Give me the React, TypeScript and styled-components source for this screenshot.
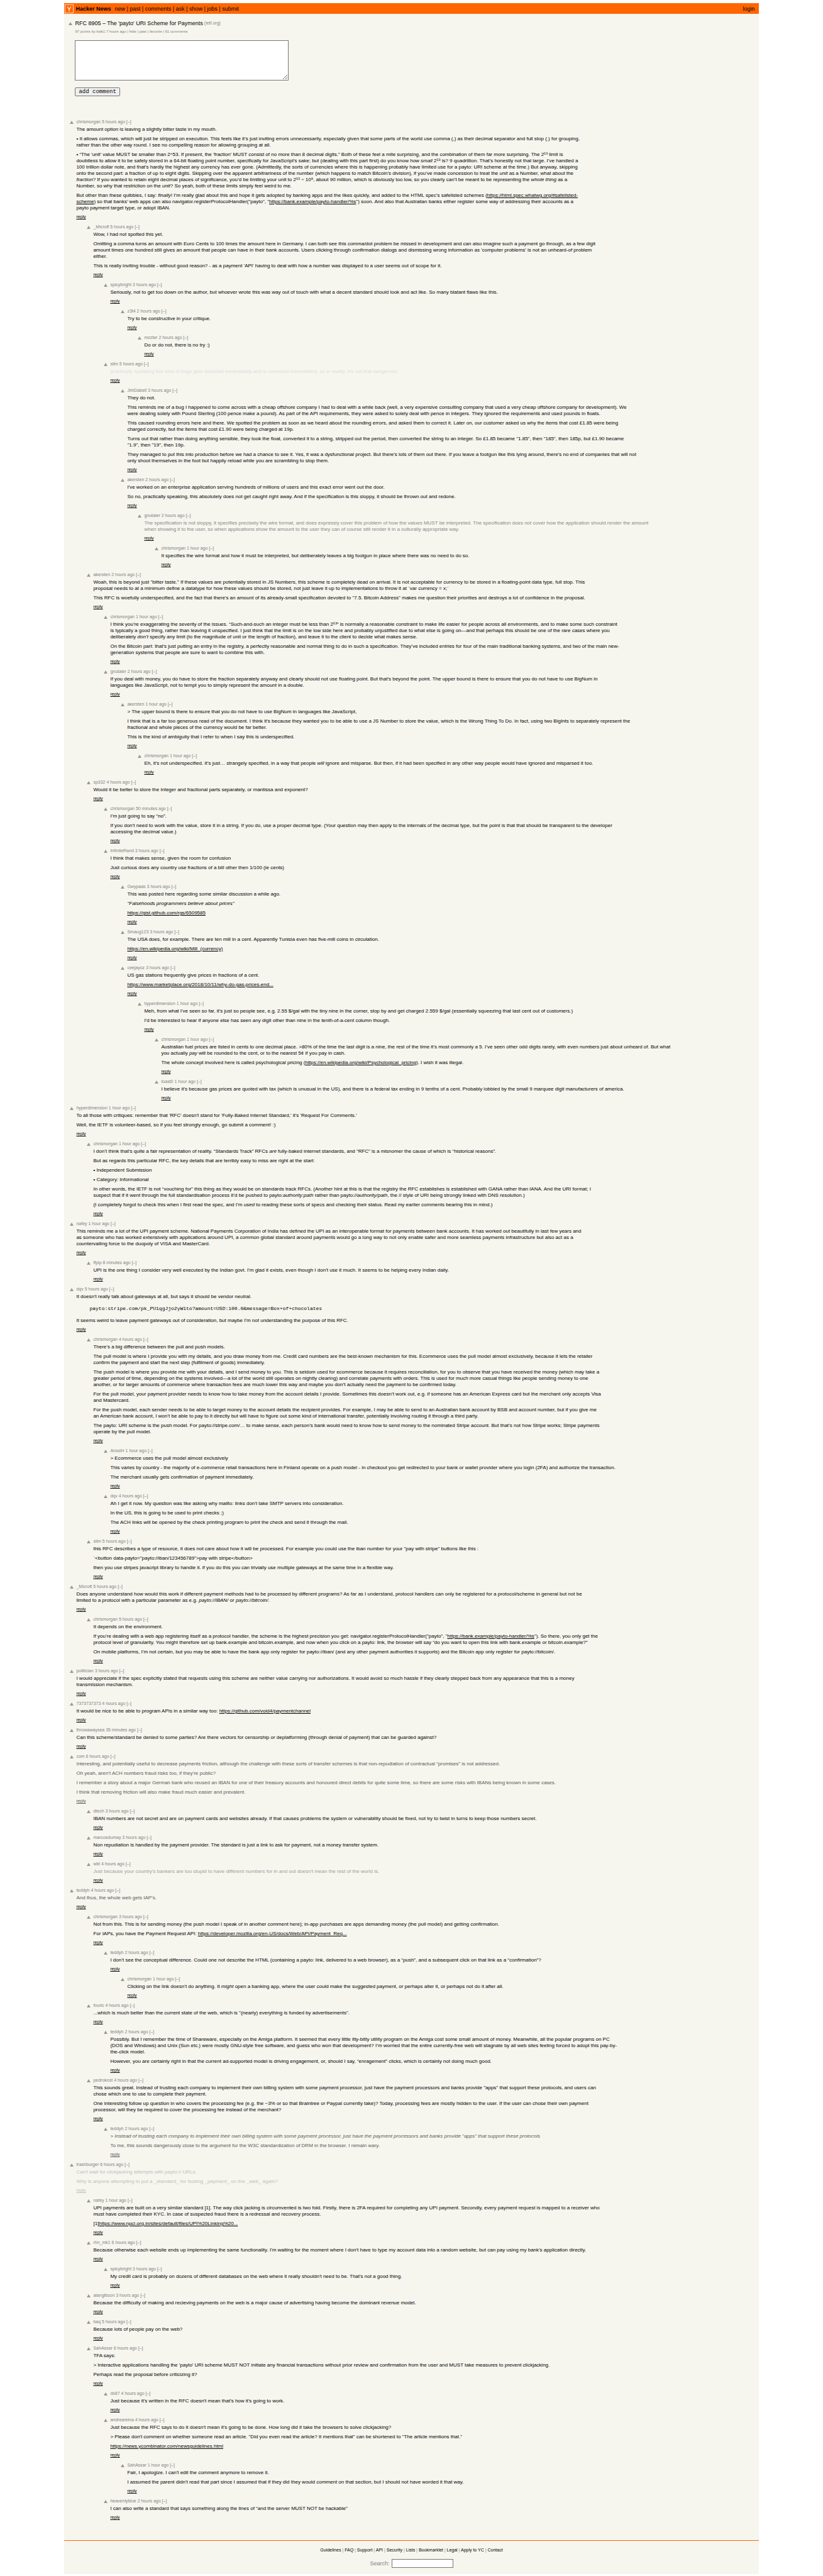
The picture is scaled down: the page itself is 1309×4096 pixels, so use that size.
import React from "react";
import styled, { createGlobalStyle } from "styled-components";

const sans = '"Liberation Sans", Arial, Helvetica, sans-serif';
const mono = '"Liberation Mono", "Courier New", monospace';

const GlobalStyle = createGlobalStyle`
  body {
    margin: 5px;
    background: #ffffff;
    color: #000000;
    font-family: ${sans};
    font-size: 8px;
    line-height: 10px;
  }
`;

const Page = styled.div`
  width: 85%;
  margin: 0 auto;
  background: #f6f6ef;
`;

const TopBar = styled.header`
  display: flex;
  align-items: center;
  height: 17px;
  padding: 0 6px 0 1px;
  background: #ff6600;
  font-size: 9px;
  line-height: 12px;
`;

const Logo = styled.a`
  display: flex;
  width: 14px;
  height: 14px;
  margin-right: 3px;
`;

const SiteName = styled.a`
  margin-right: 6px;
  color: #000000;
  font-weight: bold;
  text-decoration: none;
`;

const TopNav = styled.nav`
  flex: 1;
`;

const PlainLink = styled.a`
  color: inherit;
  text-decoration: none;
`;

const Story = styled.section`
  padding: 9px 0 0 7px;
`;

const TitleRow = styled.div`
  display: flex;
  align-items: center;
  font-size: 9px;
  line-height: 12px;
`;

const SiteBit = styled.span`
  margin-left: 2px;
  color: #828282;
  font-size: 7px;
`;

const VoteButton = styled.button`
  display: flex;
  align-items: center;
  width: 6px;
  height: 8px;
  margin: 0 4px 0 0;
  padding: 1px 0 0;
  border: 0;
  background: none;
`;

const Subtext = styled.div`
  margin: 3px 0 0 10px;
  color: #828282;
  font-size: 6px;
  line-height: 8px;
`;

const ReplyForm = styled.form`
  display: flex;
  flex-direction: column;
  align-items: flex-start;
  gap: 11px;
  margin: 10px 0 0 10px;
`;

const CommentBox = styled.textarea`
  box-sizing: border-box;
  width: 340px;
  height: 64px;
  margin: 0;
  padding: 1px;
  border: 1px solid #767676;
  border-radius: 0;
  background: #ffffff;
  font-family: ${mono};
  font-size: 9px;
`;

const SubmitButton = styled.button`
  height: 14px;
  padding: 0 5px;
  border: 1px solid #767676;
  border-radius: 2px;
  background: #efefef;
  color: #000000;
  font-family: ${mono};
  font-size: 9px;
  line-height: 12px;
`;

const Thread = styled.ul`
  display: flex;
  flex-direction: column;
  gap: 8px;
  margin: 37px 0 0;
  padding: 0 0 0 9px;
  list-style: none;
`;

const Item = styled.li<{ $depth: number }>`
  padding-left: ${(p) => p.$depth * 27}px;
`;

const CommentHead = styled.div`
  display: flex;
  color: #828282;
  font-size: 7px;
  line-height: 8px;
`;

const CommentBody = styled.div<{ $tone: string }>`
  display: flex;
  flex-direction: column;
  gap: 5px;
  max-width: 810px;
  margin: 3px 0 0 10px;
  color: ${(p) => p.$tone};

  p,
  pre {
    margin: 0;
  }

  a {
    color: inherit;
  }
`;

const CodeBlock = styled.pre`
  padding: 4px 0 4px 21px;
  overflow: auto;
  font-family: ${mono};
`;

const ReplyLink = styled.a<{ $tone: string }>`
  display: block;
  width: fit-content;
  margin: 5px 0 0 10px;
  color: ${(p) => p.$tone};
  font-size: 7px;
  line-height: 8px;
`;

const Footer = styled.footer`
  display: flex;
  flex-direction: column;
  align-items: center;
  gap: 9px;
  margin-top: 32px;
  padding: 10px 0;
  border-top: 1px solid #ff6600;
  color: #828282;
`;

const FooterLinks = styled.nav`
  font-size: 7px;
  line-height: 10px;

  a {
    color: #000000;
  }
`;

const SearchForm = styled.form`
  display: flex;
  align-items: center;
  gap: 3px;
  font-size: 9px;
  line-height: 12px;
`;

const SearchInput = styled.input`
  box-sizing: border-box;
  width: 98px;
  height: 14px;
  padding: 0 1px;
  border: 1px solid #767676;
  border-radius: 0;
  background: #ffffff;
  font-family: ${mono};
  font-size: 9px;
`;

function UpArrow() {
  return (
    <VoteButton type="button" aria-label="upvote">
      <svg width="6" height="5" viewBox="0 0 6 5">
        <path d="M3 0L6 5H0Z" fill="#999999" />
      </svg>
    </VoteButton>
  );
}

function LinkRow({ items }: { items: string[] }) {
  return (
    <>
      {items.map((item, i) => (
        <React.Fragment key={item}>
          {i > 0 && " | "}
          <PlainLink href="#">{item}</PlainLink>
        </React.Fragment>
      ))}
    </>
  );
}

function Out({ children }: { children: string }) {
  return <a href="#">{children}</a>;
}

type Comment = {
  depth: number;
  by: string;
  age: string;
  body: React.ReactNode[];
  tone?: string;
  replyTone?: string;
};

const comments: Comment[] = [
  {
    depth: 0,
    by: "chrismorgan",
    age: "5 hours ago",
    body: [
      "The amount option is leaving a slightly bitter taste in my mouth.",
      "• It allows commas, which will just be stripped on execution. This feels like it’s just inviting errors unnecessarily, especially given that some parts of the world use comma (,) as their decimal separator and full stop (.) for grouping, rather than the other way round. I see no compelling reason for allowing grouping at all.",
      <>
        • “The 'unit' value MUST be smaller than 2^53. If present, the 'fraction' MUST consist of no more than 8
        decimal digits.” Both of these feel a mite surprising, and the combination of them far more surprising. The
        2⁵³ limit is doubtless to allow it to be safely stored in a 64-bit floating point number, specifically for
        JavaScript’s sake; but (dealing with this part first) do you know how <i>small</i> 2⁵³ is? 9 quadrillion.
        That’s honestly not that large. I’ve handled a 100 trillion dollar note, and that’s hardly the highest any
        currency has ever gone. (Admittedly, the sorts of currencies where this is happening probably have limited use
        for a payto: URI scheme at the time.) But anyway, skipping onto the second part: a fraction of up to eight
        digits. Skipping over the apparent arbitrariness of the number (which happens to match Bitcoin’s division), if
        you’ve made concession to treat the <i>unit</i> as a Number, what about the <i>fraction</i>? If you wanted to
        retain eight decimal places of significance, you’d be limiting your unit to 2⁵³ ÷ 10⁸, about 90 million, which
        is obviously too low, so you clearly can’t be meant to be representing the <i>whole thing</i> as a Number, so
        why that restriction on the <i>unit</i>? So yeah, both of these limits simply feel weird to me.
      </>,
      <>
        But other than these quibbles, I say: <i>finally</i>! I’m really glad about this and hope it gets adopted by
        banking apps and the likes quickly, and added to the HTML spec’s safelisted schemes (
        <Out>https://html.spec.whatwg.org/#safelisted-scheme</Out>) so that banks’ web apps can also
        navigator.registerProtocolHandler("payto", "<Out>https://bank.example/payto-handler/%s</Out>") soon. And also
        that Australian banks either register some way of addressing their accounts as a payto payment target type, or
        adopt IBAN.
      </>,
    ],
  },
  {
    depth: 1,
    by: "_Microft",
    age: "5 hours ago",
    body: [
      "Wow, I had not spotted this yet.",
      "Omitting a comma turns an amount with Euro Cents to 100 times the amount here in Germany. I can both see this comma/dot problem be missed in development and can also imagine such a payment go through, as a few digit amount times one hundred still gives an amount that people can have in their bank accounts. Users clicking through confirmation dialogs and dismissing wrong information as 'computer problems' is not an unheard-of problem either.",
      "This is really inviting trouble - without good reason? - as a payment 'API' having to deal with how a number was displayed to a user seems out of scope for it.",
    ],
  },
  {
    depth: 2,
    by: "spicybright",
    age: "3 hours ago",
    body: [
      "Seriously, not to get too down on the author, but whoever wrote this was way out of touch with what a decent standard should look and act like. So many blatant flaws like this.",
    ],
  },
  { depth: 3, by: "z3t4", age: "2 hours ago", body: ["Try to be constructive in your critique."] },
  { depth: 4, by: "mzzter", age: "2 hours ago", body: ["Do or do not, there is no try :)"] },
  {
    depth: 2,
    by: "slim",
    age: "5 hours ago",
    tone: "#dddddd",
    body: [
      "practically speaking this kind of bugs gets detected immediately and is corrected immediately. so in reality, it's not that dangerous.",
    ],
  },
  {
    depth: 3,
    by: "JimDabell",
    age: "3 hours ago",
    body: [
      "They do not.",
      "This reminds me of a bug I happened to come across with a cheap offshore company I had to deal with a while back (well, a very expensive consulting company that used a very cheap offshore company for development). We were dealing solely with Pound Sterling (100 pence make a pound). As part of the API requirements, they were asked to solely deal with pence in integers. They ignored the requirements and used pounds in floats.",
      "This caused rounding errors here and there. We spotted the problem as soon as we heard about the rounding errors, and asked them to correct it. Later on, our customer asked us why the items that cost £1.85 were being charged correctly, but the items that cost £1.90 were being charged at 19p.",
      'Turns out that rather than doing anything sensible, they took the float, converted it to a string, stripped out the period, then converted the string to an integer. So £1.85 became "1.85", then "185", then 185p, but £1.90 became "1.9", then "19", then 19p.',
      "They managed to put this into production before we had a chance to see it. Yes, it was a dysfunctional project. But there’s lots of them out there. If you leave a footgun like this lying around, there’s no end of companies that will not only shoot themselves in the foot but happily reload while you are scrambling to stop them.",
    ],
  },
  {
    depth: 3,
    by: "akersten",
    age: "2 hours ago",
    body: [
      "I've worked on an enterprise application serving hundreds of millions of users and this exact error went out the door.",
      "So no, practically speaking, this absolutely does not get caught right away. And if the specification is this sloppy, it should be thrown out and redone.",
    ],
  },
  {
    depth: 4,
    by: "gnutaler",
    age: "2 hours ago",
    tone: "#888888",
    body: [
      "The specification is not sloppy, it specifies precisely the wire format, and does expressly cover this problem of how the values MUST be interpreted. The specification does not cover how the application should render the amount when showing it to the user, so when applications show the amount to the user they can of course still render it in a culturally appropriate way.",
    ],
  },
  {
    depth: 5,
    by: "chrismorgan",
    age: "1 hour ago",
    body: [
      "It specifies the wire format and how it must be interpreted, but deliberately leaves a big footgun in place where there was no need to do so.",
    ],
  },
  {
    depth: 1,
    by: "akersten",
    age: "2 hours ago",
    body: [
      'Woah, this is beyond just "bitter taste." If these values are potentially stored in JS Numbers, this scheme is completely dead on arrival. It is not acceptable for currency to be stored in a floating-point data type, full stop. This proposal needs to at a minimum define a datatype for how these values should be stored, not just leave it up to implementations to throw it at `var currency = x;`',
      "This RFC is woefully underspecified, and the fact that there's an amount of its already-small specification devoted to \"7.5. Bitcoin Address\" makes me question their priorities and destroys a lot of confidence in the proposal.",
    ],
  },
  {
    depth: 2,
    by: "chrismorgan",
    age: "1 hour ago",
    body: [
      <>
        I think you’re exaggerating the severity of the issues. “Such-and-such an integer must be less than 2⁵³” is
        normally a reasonable constraint to make life easier for people across all environments, and to make some such
        constraint is typically a good thing, rather than leaving it unspecified. I just think that the limit is on the
        low side here and probably unjustified due to what else is going on—and that perhaps this should be one of the
        rare cases where you deliberately <i>don’t</i> specify any limit (to the magnitude of unit or the length of
        fraction), and leave it to the client to decide what makes sense.
      </>,
      "On the Bitcoin part: that’s just putting an entry in the registry, a perfectly reasonable and normal thing to do in such a specification. They’ve included entries for four of the main traditional banking systems, and two of the main new-generation systems that people are sure to want to combine this with.",
    ],
  },
  {
    depth: 2,
    by: "gnutaler",
    age: "2 hours ago",
    body: [
      "If you deal with money, you do have to store the fraction separately anyway and clearly should not use floating point. But that's beyond the point. The upper bound is there to ensure that you do not have to use BigNum in languages like JavaScript, not to tempt you to simply represent the amount in a double.",
    ],
  },
  {
    depth: 3,
    by: "akersten",
    age: "1 hour ago",
    body: [
      "> The upper bound is there to ensure that you do not have to use BigNum in languages like JavaScript,",
      "I think that is a far too generous read of the document. I think it's because they wanted you to be able to use a JS Number to store the value, which is the Wrong Thing To Do. In fact, using two BigInts to separately represent the fractional and whole pieces of the currency would be far better.",
      "This is the kind of ambiguity that I refer to when I say this is underspecified.",
    ],
  },
  {
    depth: 4,
    by: "chrismorgan",
    age: "1 hour ago",
    body: [
      <>
        Eh, it’s not underspecified. It’s just… strangely specified, in a way that people <i>will</i> ignore and
        misparse. But then, if it had been specified in any other way people would have ignored and misparsed it too.
      </>,
    ],
  },
  {
    depth: 1,
    by: "sp332",
    age: "4 hours ago",
    body: ["Would it be better to store the integer and fractional parts separately, or mantissa and exponent?"],
  },
  {
    depth: 2,
    by: "chrismorgan",
    age: "50 minutes ago",
    body: [
      "I’m just going to say “no”.",
      "If you don’t need to work with the value, store it in a string. If you do, use a proper decimal type. (Your question may then apply to the internals of the decimal type, but the point is that that should be transparent to the developer accessing the decimal value.)",
    ],
  },
  {
    depth: 2,
    by: "InfiniteRand",
    age: "3 hours ago",
    body: [
      "I think that makes sense, given the room for confusion",
      "Just curious does any country use fractions of a bill other then 1/100 (ie cents)",
    ],
  },
  {
    depth: 3,
    by: "Gwypaas",
    age: "3 hours ago",
    body: [
      "This was posted here regarding some similar discussion a while ago.",
      <i>"Falsehoods programmers believe about prices"</i>,
      <Out>https://gist.github.com/rgs/6509585</Out>,
    ],
  },
  {
    depth: 3,
    by: "Smaug123",
    age: "3 hours ago",
    body: [
      "The USA does, for example. There are ten mill in a cent. Apparently Tunisia even has five-mill coins in circulation.",
      <Out>https://en.wikipedia.org/wiki/Mill_(currency)</Out>,
    ],
  },
  {
    depth: 3,
    by: "ceejayoz",
    age: "3 hours ago",
    body: [
      "US gas stations frequently give prices in fractions of a cent.",
      <Out>https://www.marketplace.org/2018/10/11/why-do-gas-prices-end...</Out>,
    ],
  },
  {
    depth: 4,
    by: "hyperdimension",
    age: "1 hour ago",
    body: [
      "Meh, from what I've seen so far, it's just so people see, e.g. 2.55 $/gal with the tiny nine in the corner, stop by and get charged 2.559 $/gal (essentially squeezing that last cent out of customers.)",
      "I'd be interested to hear if anyone else has seen any digit other than nine in the tenth-of-a-cent column though.",
    ],
  },
  {
    depth: 5,
    by: "chrismorgan",
    age: "1 hour ago",
    body: [
      <>
        Australian fuel prices are listed in cents to one decimal place. &gt;80% of the time the last digit is a nine,
        the rest of the time it’s most commonly a 5. I’ve seen other odd digits rarely, with even numbers just about
        unheard of. But what you actually <i>pay</i> will be rounded to the cent, or to the nearest 5¢ if you pay in
        cash.
      </>,
      <>
        The whole concept involved here is called psychological pricing (
        <Out>https://en.wikipedia.org/wiki/Psychological_pricing</Out>). I wish it was illegal.
      </>,
    ],
  },
  {
    depth: 5,
    by: "toast0",
    age: "1 hour ago",
    body: [
      "I believe it's because gas prices are quoted with tax (which is unusual in the US), and there is a federal tax ending in 9 tenths of a cent. Probably lobbied by the small 9 marquee digit manufacturers of america.",
    ],
  },
  {
    depth: 0,
    by: "hyperdimension",
    age: "1 hour ago",
    body: [
      "To all those with critiques: remember that 'RFC' doesn't stand for 'Fully-Baked Internet Standard,' it's 'Request For Comments.'",
      "Well, the IETF is volunteer-based, so if you feel strongly enough, go submit a comment! :)",
    ],
  },
  {
    depth: 1,
    by: "chrismorgan",
    age: "1 hour ago",
    body: [
      <>
        I don’t think that’s quite a fair representation of reality. “Standards Track” RFCs <i>are</i> fully-baked
        internet standards, and “RFC” is a misnomer the cause of which is “historical reasons”.
      </>,
      "But as regards this particular RFC, the key details that are terribly easy to miss are right at the start:",
      "• Independent Submission",
      "• Category: Informational",
      <>
        In other words, the IETF is not “vouching for” this thing as they would be on standards track RFCs. (Another
        hint at this is that the registry the RFC establishes is established with GANA rather than IANA. And the URI
        format; I suspect that if it went through the full standardisation process it’d be pushed to payto:
        <i>authority:path</i> rather than payto:<i>//authority/path</i>, the // style of URI being strongly linked with
        DNS resolution.)
      </>,
      <>
        (I completely forgot to check this when I first read the spec, and I’m <i>used</i> to reading these sorts of
        specs and checking their status. Read my earlier comments bearing this in mind.)
      </>,
    ],
  },
  {
    depth: 0,
    by: "nafey",
    age: "1 hour ago",
    body: [
      "This reminds me a lot of the UPI payment scheme. National Payments Corporation of India has defined the UPI as an interoperable format for payments between bank accounts. It has worked out beautifully in last few years and as someone who has worked extensively with applications around UPI, a common global standard around payments would go a long way to not only enable safer and more seamless payments infrastructure but also act as a countervailing force to the duopoly of VISA and MasterCard.",
    ],
  },
  {
    depth: 1,
    by: "ffpip",
    age: "8 minutes ago",
    body: [
      "UPI is the one thing I consider very well executed by the Indian govt. I'm glad it exists, even though I don't use it much. It seems to be helping every Indian daily.",
    ],
  },
  {
    depth: 0,
    by: "dqv",
    age: "5 hours ago",
    body: [
      "It doesn't really talk about gateways at all, but says it should be vendor neutral.",
      <CodeBlock>payto:stripe.com/pk_PU1qgJjo2yW1to?amount=USD:100.0&amp;message=Box+of+chocolates</CodeBlock>,
      "It seems weird to leave payment gateways out of consideration, but maybe I'm not understanding the purpose of this RFC.",
    ],
  },
  {
    depth: 1,
    by: "chrismorgan",
    age: "4 hours ago",
    body: [
      "There’s a big difference between the pull and push models.",
      "The pull model is where I provide you with my details, and you draw money from me. Credit card numbers are the best-known mechanism for this. Ecommerce uses the pull model almost exclusively, because it lets the retailer confirm the payment and start the next step (fulfilment of goods) immediately.",
      "The push model is where you provide me with your details, and I send money to you. This is seldom used for ecommerce because it requires reconciliation, for you to observe that you have received the money (which may take a greater period of time, depending on the systems involved—a lot of the world still operates on nightly clearing) and correlate payments with orders. This is used for much more casual things like people sending money to one another, or for larger amounts of commerce where transaction fees are much lower this way and maybe you don’t actually need the payment to be confirmed today.",
      "For the pull model, your payment provider needs to know how to take money from the account details I provide. Sometimes this doesn’t work out, e.g. if someone has an American Express card but the merchant only accepts Visa and Mastercard.",
      "For the push model, each sender needs to be able to target money to the account details the recipient provides. For example, I may be able to send to an Australian bank account by BSB and account number, but if you give me an American bank account, I won’t be able to pay to it directly but will have to figure out some kind of international transfer, potentially involving routing it through a third party.",
      "The payto: URI scheme is the push model. For payto://stripe.com/… to make sense, each person’s bank would need to know how to send money to the nominated Stripe account. But that’s not how Stripe works; Stripe payments operate by the pull model.",
    ],
  },
  {
    depth: 2,
    by: "AnssiH",
    age: "1 hour ago",
    body: [
      "> Ecommerce uses the pull model almost exclusively",
      "This varies by country - the majority of e-commerce retail transactions here in Finland operate on a push model - in checkout you get redirected to your bank or wallet provider where you login (2FA) and authorize the transaction.",
      "The merchant usually gets confirmation of payment immediately.",
    ],
  },
  {
    depth: 2,
    by: "dqv",
    age: "4 hours ago",
    body: [
      "Ah I get it now. My question was like asking why mailto: links don't take SMTP servers into consideration.",
      "In the US, this is going to be used to print checks ;)",
      "The ACH links will be opened by the check printing program to print the check and send it through the mail.",
    ],
  },
  {
    depth: 1,
    by: "slim",
    age: "5 hours ago",
    body: [
      'this RFC describes a type of resource, it does not care about how it will be processed. For example you could use the iban number for your "pay with stripe" buttons like this :',
      '`<button data-payto="payto://iban/123456789">pay with stripe</button>',
      "then you use stripes javacript library to handle it. if you do this you can trivially use multiple gateways at the same time in a flexible way.",
    ],
  },
  {
    depth: 0,
    by: "_Microft",
    age: "5 hours ago",
    body: [
      <>
        Does anyone understand how would this work if different payment methods had to be processed by different
        programs? As far as I understand, protocol handlers can only be registered for a protocol/scheme in general but
        not be limited to a protocol with a particular parameter as e.g. <i>payto://IBAN/</i> or{" "}
        <i>payto://bitcoin/</i>.
      </>,
    ],
  },
  {
    depth: 1,
    by: "chrismorgan",
    age: "5 hours ago",
    body: [
      "It depends on the environment.",
      <>
        If you’re dealing with a web app registering itself as a protocol handler, the scheme is the highest precision
        you get: navigator.registerProtocolHandler("payto", "<Out>https://bank.example/payto-handler/%s</Out>"). So
        there, you only get the protocol level of granularity. You might therefore set up bank.example and
        bitcoin.example, and now when you click on a payto: link, the browser will say “do you want to open this link
        with bank.example or bitcoin.example?”
      </>,
      "On mobile platforms, I’m not certain, but you may be able to have the bank app only register for payto://iban/ (and any other payment authorities it supports) and the Bitcoin app only register for payto://bitcoin/.",
    ],
  },
  {
    depth: 0,
    by: "politician",
    age: "3 hours ago",
    body: [
      "I would appreciate if the spec explicitly stated that requests using this scheme are neither value carrying nor authorizations. It would avoid so much hassle if they clearly stepped back from any appearance that this is a money transmission mechanism.",
    ],
  },
  {
    depth: 0,
    by: "7373737373",
    age: "4 hours ago",
    body: [
      <>
        It would be nice to be able to program APIs in a similar way too:{" "}
        <Out>https://github.com/void4/paymentchannel</Out>
      </>,
    ],
  },
  {
    depth: 0,
    by: "throwawaysea",
    age: "35 minutes ago",
    body: [
      "Can this scheme/standard be denied to some parties? Are there vectors for censorship or deplatforming (through denial of payment) that can be guarded against?",
    ],
  },
  {
    depth: 0,
    by: "com",
    age: "6 hours ago",
    tone: "#5a5a5a",
    replyTone: "#5a5a5a",
    body: [
      "Interesting, and potentially useful to decrease payments friction, although the challenge with these sorts of transfer schemes is that non-repudiation of contractual “promises” is not addressed.",
      "Oh yeah, aren’t ACH numbers fraud risks too, if they’re public?",
      "I remember a story about a major German bank who reused an IBAN for one of their treasury accounts and honoured direct debits for quite some time, so there are some risks with IBANs being known in some cases.",
      "I think that removing friction will also make fraud much easier and prevalent.",
    ],
  },
  {
    depth: 1,
    by: "dtech",
    age: "3 hours ago",
    body: [
      "IBAN numbers are not secret and are on payment cards and websites already. If that causes problems the system or vulnerability should be fixed, not try to twist in turns to keep those numbers secret.",
    ],
  },
  {
    depth: 1,
    by: "marcosdumay",
    age: "3 hours ago",
    body: [
      "Non repudiation is handled by the payment provider. The standard is just a link to ask for payment, not a money transfer system.",
    ],
  },
  {
    depth: 1,
    by: "wbl",
    age: "4 hours ago",
    tone: "#9c9c9c",
    body: [
      "Just because your country's bankers are too stupid to have different numbers for in and out doesn't mean the rest of the world is.",
    ],
  },
  { depth: 0, by: "teddyh", age: "4 hours ago", tone: "#5a5a5a", body: ["And thus, the whole web gets IAP’s."] },
  {
    depth: 1,
    by: "chrismorgan",
    age: "3 hours ago",
    body: [
      "Not from this. This is for sending money (the push model I speak of in another comment here); in-app purchases are apps demanding money (the pull model) and getting confirmation.",
      <>
        For IAPs, you have the Payment Request API:{" "}
        <Out>https://developer.mozilla.org/en-US/docs/Web/API/Payment_Req...</Out>
      </>,
    ],
  },
  {
    depth: 2,
    by: "teddyh",
    age: "2 hours ago",
    body: [
      "I don’t see the conceptual difference. Could one not describe the HTML (containing a payto: link, delivered to a web browser), as a “push”, and a subsequent click on that link as a “confirmation”?",
    ],
  },
  {
    depth: 3,
    by: "chrismorgan",
    age: "1 hour ago",
    body: [
      <>
        Clicking on the link doesn’t do anything. It <i>might</i> open a banking app, where the user could make the
        suggested payment, or perhaps alter it, or perhaps not do it after all.
      </>,
    ],
  },
  {
    depth: 1,
    by: "fouric",
    age: "4 hours ago",
    body: [
      '...which is much better than the current state of the web, which is "(nearly) everything is funded by advertisements".',
    ],
  },
  {
    depth: 2,
    by: "teddyh",
    age: "2 hours ago",
    body: [
      "Possibly. But I remember the time of Shareware, especially on the Amiga platform. It seemed that every little itty-bitty utility program on the Amiga cost some small amount of money. Meanwhile, all the popular programs on PC (DOS and Windows) and Unix (Sun etc.) were mostly GNU-style free software, and guess who won that development? I’m worried that the entire currently-free web will stagnate by all web sites feeling forced to adopt this pay-by-the-click model.",
      "However, you are certainly right in that the current ad-supported model is driving engagement, or, should I say, “enragement” clicks, which is certainly not doing much good.",
    ],
  },
  {
    depth: 1,
    by: "pedrokost",
    age: "4 hours ago",
    body: [
      'This sounds great. Instead of trusting each company to implement their own billing system with some payment processor, just have the payment processors and banks provide "apps" that support these protocols, and users can chose which one to use to complete their payment.',
      "One interesting follow up question in who covers the processing fee (e.g. the ~3% or so that Braintree or Paypal currently take)? Today, processing fees are mostly hidden to the user. If the user can chose their own payment processor, will they be required to cover the processing fee instead of the merchant?",
    ],
  },
  {
    depth: 2,
    by: "teddyh",
    age: "2 hours ago",
    tone: "#5a5a5a",
    replyTone: "#5a5a5a",
    body: [
      <>
        &gt;{" "}
        <i>
          Instead of trusting each company to implement their own billing system with some payment processor, just have
          the payment processors and banks provide "apps" that support these protocols
        </i>
      </>,
      "To me, this sounds dangerously close to the argument for the W3C standardization of DRM in the browser. I remain wary.",
    ],
  },
  {
    depth: 0,
    by: "trashburger",
    age: "6 hours ago",
    tone: "#bebebe",
    replyTone: "#bebebe",
    body: [
      "Can't wait for clickjacking attempts with payto:// URLs.",
      "Why is anyone attempting to put a _standard_ for fscking _payment_ on the _web_ again?",
    ],
  },
  {
    depth: 1,
    by: "nafey",
    age: "1 hour ago",
    body: [
      "UPI payments are built on a very similar standard [1]. The way click jacking is circumvented is two fold. Firstly, there is 2FA required for completing any UPI payment. Secondly, every payment request is mapped to a receiver who must have completed their KYC. In case of suspected fraud there is a redressal and recovery process.",
      <>
        [1]<Out>https://www.npci.org.in/sites/default/files/UPI%20Linking%20...</Out>
      </>,
    ],
  },
  {
    depth: 1,
    by: "rhn_mk1",
    age: "6 hours ago",
    body: [
      "Because otherwise each website ends up implementing the same functionality. I'm waiting for the moment where I don't have to type my account data into a random website, but can pay using my bank's application directly.",
    ],
  },
  {
    depth: 2,
    by: "spicybright",
    age: "3 hours ago",
    body: [
      "My credit card is probably on dozens of different databases on the web where it really shouldn't need to be. That's not a good thing.",
    ],
  },
  {
    depth: 1,
    by: "alangibson",
    age: "3 hours ago",
    body: [
      "Because the difficulty of making and recieving payments on the web is a major cause of advertising having become the dominant revenue model.",
    ],
  },
  { depth: 1, by: "baq", age: "5 hours ago", body: ["Because lots of people pay on the web?"] },
  {
    depth: 1,
    by: "SahAssar",
    age: "6 hours ago",
    body: [
      "TFA says:",
      "> Interactive applications handling the 'payto' URI scheme MUST NOT initiate any financial transactions without prior review and confirmation from the user and MUST take measures to prevent clickjacking.",
      "Perhaps read the proposal before criticizing it?",
    ],
  },
  {
    depth: 2,
    by: "dx87",
    age: "4 hours ago",
    body: ["Just because it's written in the RFC doesn't mean that's how it's going to work."],
  },
  {
    depth: 2,
    by: "andreareina",
    age: "4 hours ago",
    body: [
      "Just because the RFC says to do it doesn't mean it's going to be done. How long did it take the browsers to solve clickjacking?",
      '> Please don\'t comment on whether someone read an article. "Did you even read the article? It mentions that" can be shortened to "The article mentions that."',
      <Out>https://news.ycombinator.com/newsguidelines.html</Out>,
    ],
  },
  {
    depth: 3,
    by: "SahAssar",
    age: "1 hour ago",
    body: [
      "Fair, I apologize. I can't edit the comment anymore to remove it.",
      "I assumed the parent didn't read that part since I assumed that if they did they would comment on that section, but I should not have worded it that way.",
    ],
  },
  {
    depth: 2,
    by: "heavenlyblue",
    age: "2 hours ago",
    body: ["I can also write a standard that says something along the lines of “and the server MUST NOT be hackable”"],
  },
];

function CommentItem({ depth, by, age, body, tone = "#000000", replyTone = "#000000" }: Comment) {
  return (
    <Item $depth={depth}>
      <CommentHead>
        <UpArrow />
        <span>
          <PlainLink href="#">{by}</PlainLink> <PlainLink href="#">{age}</PlainLink>{" "}
          <PlainLink href="#">[–]</PlainLink>
        </span>
      </CommentHead>
      <CommentBody $tone={tone}>
        {body.map((part, i) =>
          React.isValidElement(part) && part.type === CodeBlock ? (
            <React.Fragment key={i}>{part}</React.Fragment>
          ) : (
            <p key={i}>{part}</p>
          )
        )}
      </CommentBody>
      <ReplyLink href="#" $tone={replyTone}>
        reply
      </ReplyLink>
    </Item>
  );
}

const navItems = ["new", "past", "comments", "ask", "show", "jobs", "submit"];
const footerItems = [
  "Guidelines",
  "FAQ",
  "Support",
  "API",
  "Security",
  "Lists",
  "Bookmarklet",
  "Legal",
  "Apply to YC",
  "Contact",
];

export default function App() {
  return (
    <>
      <GlobalStyle />
      <Page>
        <TopBar>
          <Logo href="#" aria-label="Y Combinator">
            <svg width="14" height="14" viewBox="0 0 20 20">
              <rect x="0.5" y="0.5" width="19" height="19" fill="#ff6600" stroke="#ffffff" />
              <path d="M6 5L10 11.5L14 5M10 11V16" fill="none" stroke="#ffffff" strokeWidth="1.7" />
            </svg>
          </Logo>
          <SiteName href="#">Hacker News</SiteName>
          <TopNav>
            <LinkRow items={navItems} />
          </TopNav>
          <PlainLink href="#">login</PlainLink>
        </TopBar>
        <main>
          <Story>
            <TitleRow>
              <UpArrow />
              <PlainLink href="#">RFC 8905 – The 'payto' URI Scheme for Payments</PlainLink>
              <SiteBit>
                (<PlainLink href="#">ietf.org</PlainLink>)
              </SiteBit>
            </TitleRow>
            <Subtext>
              97 points by <PlainLink href="#">kwk1</PlainLink> <PlainLink href="#">7 hours ago</PlainLink> |{" "}
              <LinkRow items={["hide", "past", "favorite", "61 comments"]} />
            </Subtext>
            <ReplyForm>
              <CommentBox aria-label="comment" />
              <SubmitButton type="button">add comment</SubmitButton>
            </ReplyForm>
          </Story>
          <Thread>
            {comments.map((comment, i) => (
              <CommentItem key={i} {...comment} />
            ))}
          </Thread>
        </main>
        <Footer>
          <FooterLinks>
            <LinkRow items={footerItems} />
          </FooterLinks>
          <SearchForm>
            <label htmlFor="search">Search:</label>
            <SearchInput id="search" type="text" />
          </SearchForm>
        </Footer>
      </Page>
    </>
  );
}
